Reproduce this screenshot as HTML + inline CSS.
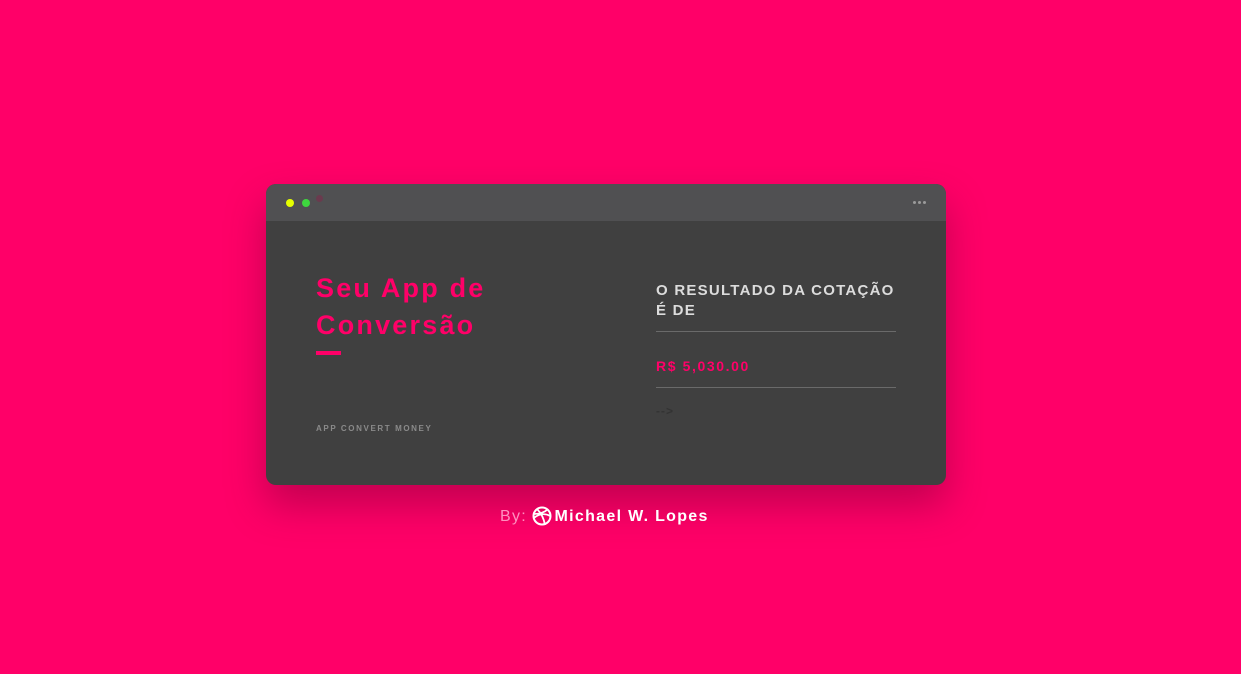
<!DOCTYPE html>
<html><head><meta charset="utf-8"><style>
*{margin:0;padding:0;box-sizing:border-box}
body{width:1241px;height:674px;background:#ff0068;font-family:"Liberation Sans",sans-serif;position:relative;overflow:hidden}
.card{position:absolute;left:266px;top:184px;width:680px;height:301px;background:#404040;border-radius:10px;overflow:hidden;box-shadow:0 20px 40px rgba(120,0,50,0.45)}
.bar{height:37px;background:#505052;position:relative}
.dot{position:absolute;top:15px;width:8px;height:8px;border-radius:50%}
.t{position:absolute;letter-spacing:1px;font-weight:bold;white-space:nowrap}
</style></head><body>
<div class="card">
<div class="bar">
<div class="dot" style="left:20px;background:#e6ff00"></div>
<div class="dot" style="left:36px;background:#3ed63e"></div>
<div class="dot" style="left:50px;top:11px;width:7px;height:7px;background:#6a3a4e"></div>
<div style="position:absolute;right:20px;top:17px;font-size:0;display:flex;gap:2px"><i style="width:3px;height:3px;background:#9a9a9a;border-radius:50%"></i><i style="width:3px;height:3px;background:#9a9a9a;border-radius:50%"></i><i style="width:3px;height:3px;background:#9a9a9a;border-radius:50%"></i></div>
</div>
<div class="t" style="left:50px;top:86px;color:#ff0068;font-size:27px;line-height:37px;letter-spacing:2.2px">Seu App de<br>Conversão</div>
<div style="position:absolute;left:50px;top:167px;width:25px;height:4px;background:#ff0068"></div>
<div class="t" style="left:50px;top:240px;color:#8a8a8a;font-size:8px;letter-spacing:1.6px">APP CONVERT MONEY</div>
<div class="t" style="left:390px;top:97px;color:#dcdcdc;font-size:15px;line-height:20px;letter-spacing:1.25px">O RESULTADO DA COTAÇÃO<br>É DE</div>
<div style="position:absolute;left:390px;top:147px;width:240px;height:1px;background:#6a6a6a"></div>
<div class="t" style="left:390px;top:174px;color:#ff0068;font-size:14px;letter-spacing:1.6px">R$ 5,030.00</div>
<div style="position:absolute;left:390px;top:203px;width:240px;height:1px;background:#6a6a6a"></div>
<div class="t" style="left:390px;top:220px;color:#333;font-size:12px">--&gt;</div>
</div>
<div style="position:absolute;left:500px;top:506px;font-size:16px;letter-spacing:1.3px;color:#fff;white-space:nowrap">
<span style="color:#ff8fbf">By:</span>
<svg width="20" height="20" viewBox="0 0 20 20" style="vertical-align:-5px;margin-left:-1px"><circle cx="10" cy="10" r="8.5" fill="none" stroke="#fff" stroke-width="2"/><path d="M2 8c6 0 11-2 14-5M5 3c4 4 7 10 8 16M1.8 12c5-4 11-5 16.4-2" fill="none" stroke="#fff" stroke-width="1.8"/></svg> <b style="margin-left:-3px">Michael W. Lopes</b>
</div>
</body></html>
